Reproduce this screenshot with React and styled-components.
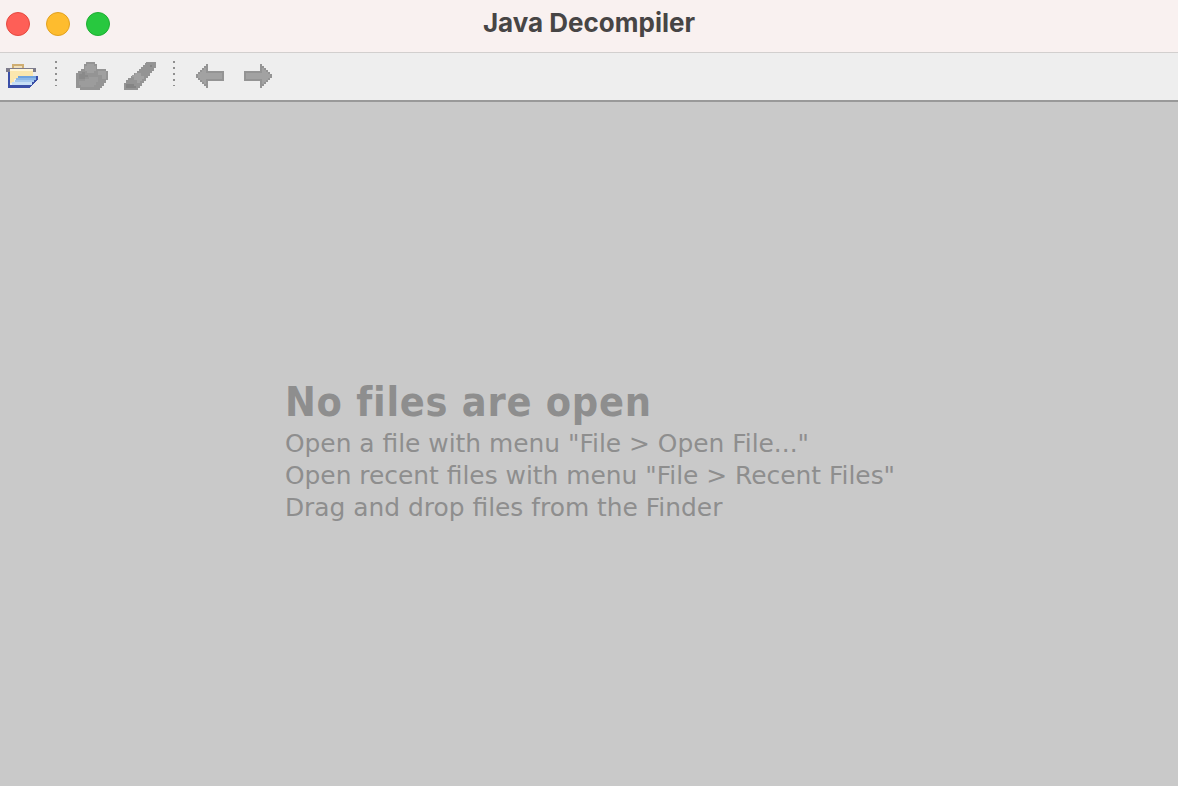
import React from 'react';
import styled, { createGlobalStyle } from 'styled-components';

const GlobalStyle = createGlobalStyle`
  html, body {
    margin: 0;
    padding: 0;
    height: 100%;
    overflow: hidden;
  }

  #root {
    height: 100%;
  }
`;

const Wrapper = styled.div`
  display: flex;
  flex-direction: column;
  width: 1178px;
  height: 786px;
  background: #c9c9c9;
`;

const TitleBar = styled.header`
  box-sizing: border-box;
  display: flex;
  flex: 0 0 53px;
  position: relative;
  align-items: center;
  justify-content: center;
  padding-bottom: 7px;
  background: #f9f1f0;
  border-bottom: 1px solid #d2cfce;
`;

const TrafficLights = styled.div`
  display: flex;
  position: absolute;
  top: 12px;
  left: 6px;
  gap: 16px;
`;

const Light = styled.span`
  box-sizing: border-box;
  width: 24px;
  height: 24px;
  border-radius: 50%;
  background: ${props => props.color};
  border: 1px solid ${props => props.edge};
`;

const Title = styled.h1`
  margin: 0;
  font-family: Inter, "Liberation Sans", sans-serif;
  font-size: 26px;
  font-weight: 700;
  color: #474545;
`;

const Toolbar = styled.nav`
  box-sizing: border-box;
  display: flex;
  flex: 0 0 49px;
  align-items: center;
  padding: 0 0 1px 6px;
  background: #eeeeee;
  border-bottom: 2px solid #999999;
`;

const ToolIcon = styled.svg`
  display: block;
  flex: none;
  width: ${props => props.$w}px;
  height: ${props => props.$h}px;
  margin-left: ${props => props.$gap || 0}px;
  shape-rendering: crispEdges;
`;

const Separator = styled.span`
  flex: none;
  width: 2px;
  height: 25px;
  margin: 0 0 5px ${props => props.$gap}px;
  background: repeating-linear-gradient(to bottom, #8f8f8f 0 2px, transparent 2px 6px);
`;

const Content = styled.main`
  display: flex;
  flex: 1;
  align-items: center;
  justify-content: center;
  padding-top: 16px;
  color: #8e8e8e;
  font-family: "DejaVu Sans", Verdana, sans-serif;
`;

const Message = styled.div`
  display: flex;
  flex-direction: column;
  padding-left: 2px;
`;

const Heading = styled.h2`
  margin: 0 0 4px;
  font-family: "DejaVu Sans Condensed", "DejaVu Sans", sans-serif;
  font-size: 41px;
  line-height: 44px;
  font-weight: 700;
  letter-spacing: 0.75px;
`;

const Line = styled.p`
  margin: 0;
  font-size: 24.9px;
  line-height: 32px;
  font-weight: 400;
`;

const OpenIcon = () => (
  <ToolIcon $w={32} $h={24} viewBox="0 0 32 24">
    <path fill="#cfae72" d="M6 0h12v5H6z" />
    <path fill="#efe0bd" d="M8 2h8v3H8z" />
    <path fill="#7d7c8c" d="M0 4h30v4H0z" />
    <path fill="#fbe7ae" d="M4 5h23v7h-4v3H8v4H4z" />
    <path fill="#fff6d8" d="M4 5h23v2H4z" />
    <path fill="#3a4fa8" d="M2 8h2v13h18l8-9h2v3l-8 9H2z" />
    <path fill="#6fa3e0" d="M12 12h18v2H12z" />
    <path fill="#8cb8e8" d="M10 14h20v2H10z" />
    <path fill="#a6c9ef" d="M9 16h19v2H9z" />
    <path fill="#c7dff6" d="M6 18h20v3H6z" />
  </ToolIcon>
);

const SaveIcon = () => (
  <ToolIcon $w={32} $h={28} $gap={19} viewBox="0 0 32 28">
    <path fill="#949494" d="M10 0h9v2h2v5h9v2h2v9h-2v3h-2v3h-2v2h-2v2H4v-2H0V11h2V9h3V7h3V2h2z" />
    <path fill="#a0a0a0" d="M11 2h7v2h2v5h-2v2h-7V9H9V4h2zM22 9h8v8h-4v-4h-4z" />
    <path fill="#9c9c9c" d="M3 19h6v-2h4v-2h9v5h-2v3h-2v2H5v-2H3z" />
    <path fill="#8a8a8a" d="M3 12h3v-2h3v3h3v2h-3v2H3z" />
  </ToolIcon>
);

const PencilIcon = () => (
  <ToolIcon $w={32} $h={28} $gap={16} viewBox="0 0 32 28">
    <path fill="#949494" d="M22 0h10v6h-2v3h-2v2h-2v3h-2v2h-2v3h-2v2h-2v3h-2v2h-2v2H0v-7h2v-3h2v-2h3v-2h3v-3h3V9h2V7h2V5h2V3h2V1h1z" />
    <path fill="#a2a2a2" d="M14 11h3v3h3v3h-2v2h-2v2h-3v-3h-3v-3h-2v-2h3v-2h3z" />
    <path fill="#848484" d="M26 3h2v2h-2zM2 22h8v2h2v2H2z" />
  </ToolIcon>
);

const BackIcon = () => (
  <ToolIcon $w={28} $h={24} $gap={21} viewBox="0 0 28 24">
    <path fill="#949494" d="M10 0h2v7h16v10H12v7h-2v-2H8v-2H6v-2H4v-2H2v-2H0v-4h2V8h2V6h2V4h2V2h2z" />
    <path fill="#a2a2a2" d="M10 4v5h16v6H10v5H8v-2H6v-2H4v-2H2v-4h2V8h2V6h2V4z" />
  </ToolIcon>
);

const ForwardIcon = () => (
  <ToolIcon $w={28} $h={24} $gap={20} viewBox="0 0 28 24">
    <path fill="#949494" d="M18 0h-2v7H0v10h16v7h2v-2h2v-2h2v-2h2v-2h2v-2h2v-4h-2V8h-2V6h-2V4h-2V2h-2z" />
    <path fill="#a2a2a2" d="M18 4v5H2v6h16v5h2v-2h2v-2h2v-2h2v-4h-2V8h-2V6h-2V4z" />
  </ToolIcon>
);

const App = () => (
  <>
    <GlobalStyle />

    <Wrapper>
      <TitleBar>
        <TrafficLights>
          <Light color="#fe5f57" edge="#e5493f" />
          <Light color="#febc2e" edge="#e2a11f" />
          <Light color="#28c83f" edge="#1eae32" />
        </TrafficLights>

        <Title>Java Decompiler</Title>
      </TitleBar>

      <Toolbar>
        <OpenIcon />
        <Separator $gap={17} />
        <SaveIcon />
        <PencilIcon />
        <Separator $gap={17} />
        <BackIcon />
        <ForwardIcon />
      </Toolbar>

      <Content>
        <Message>
          <Heading>No files are open</Heading>
          <Line>Open a file with menu "File &gt; Open File..."</Line>
          <Line>Open recent files with menu "File &gt; Recent Files"</Line>
          <Line>Drag and drop files from the Finder</Line>
        </Message>
      </Content>
    </Wrapper>
  </>
);

export default App;
